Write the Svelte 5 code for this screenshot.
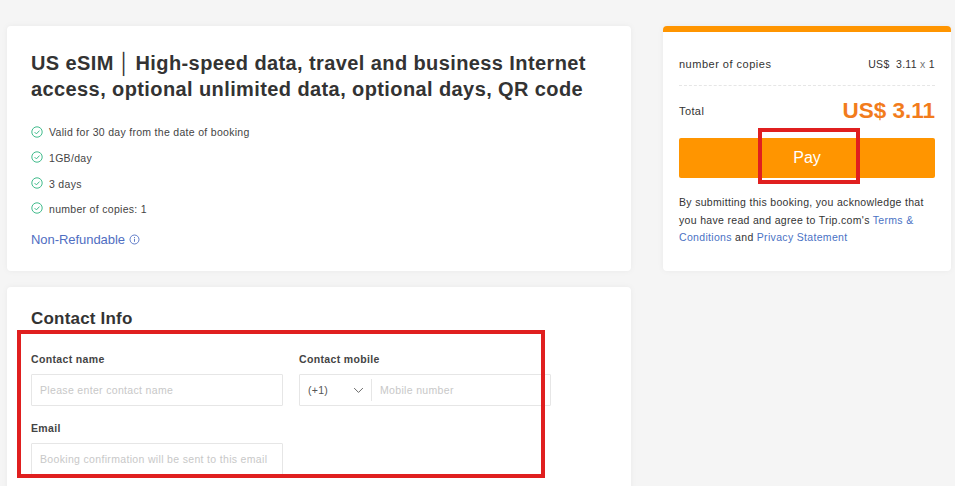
<script lang="ts">
  const perks = [
    { text: 'Valid for 30 day from the date of booking', h: 26 },
    { text: '1GB/day', h: 26 },
    { text: '3 days', h: 25 },
    { text: 'number of copies: 1', h: 26 }
  ];
</script>

<div class="page">
  <div class="left">
    <section class="card product">
      <h1>US eSIM&thinsp;│&thinsp;High-speed data, travel and business Internet access, optional unlimited data, optional days, QR code</h1>
      <ul>
        {#each perks as perk, i}
          <li style="height: {perk.h}px">
            <svg class:lift={i > 0} viewBox="0 0 12 12" width="12" height="12" aria-hidden="true">
              <circle cx="6" cy="6" r="5.2" />
              <path d="M3.6 6.1 5.4 7.9 8.5 4.6" />
            </svg>
            <span>{perk.text}</span>
          </li>
        {/each}
      </ul>
      <div class="refund">
        <span>Non-Refundable</span>
        <svg viewBox="0 0 11 11" width="11" height="11" aria-hidden="true">
          <circle cx="5.5" cy="5.5" r="4.5" />
          <path d="M5.5 4.8v3M5.5 3v1" />
        </svg>
      </div>
    </section>

    <section class="card contact">
      <h2>Contact Info</h2>
      <div class="fields">
        <div class="field">
          <label for="cname">Contact name</label>
          <input id="cname" placeholder="Please enter contact name" />
        </div>
        <div class="field">
          <label for="mobile">Contact mobile</label>
          <div class="phone">
            <div class="code">
              <span>(+1)</span>
              <svg viewBox="0 0 12 8" width="11" height="7" aria-hidden="true"><path d="M1 1.2 6 6.2 11 1.2" /></svg>
            </div>
            <input id="mobile" placeholder="Mobile number" />
          </div>
        </div>
        <div class="field">
          <label for="email">Email</label>
          <input id="email" placeholder="Booking confirmation will be sent to this email" />
        </div>
      </div>
      <div class="mark mark-form"></div>
    </section>
  </div>

  <aside class="card summary">
    <div class="row copies">
      <span class="copies-label">number of copies</span>
      <span class="price">US$&nbsp; 3.11 <em>x</em> 1</span>
    </div>
    <div class="row total">
      <span>Total</span>
      <strong>US$ 3.11</strong>
    </div>
    <button type="button">Pay</button>
    <p>By submitting this booking, you acknowledge that you have read and agree to Trip.com's <a href="#terms">Terms &amp; Conditions</a> and <a href="#privacy">Privacy Statement</a></p>
    <div class="mark mark-pay"></div>
  </aside>
</div>

<style>
  :global(body) {
    margin: 0;
    background: #f5f5f5;
    overflow: hidden;
  }
  .page {
    display: flex;
    align-items: flex-start;
    gap: 32px;
    height: 486px;
    padding: 26px 4px 0 7px;
    box-sizing: border-box;
    overflow: hidden;
    font-family: "Liberation Sans", Arial, sans-serif;
    color: #333;
  }
  .left {
    display: flex;
    flex-direction: column;
    gap: 16px;
    width: 624px;
    flex: none;
  }
  .card {
    position: relative;
    background: #fff;
    border-radius: 4px;
    box-shadow: 0 0 6px rgba(0, 0, 0, 0.05);
  }
  .product {
    height: 245px;
    padding: 24px 24px 0;
    box-sizing: border-box;
  }
  h1 {
    margin: 0;
    font-size: 20px;
    line-height: 26px;
    font-weight: 700;
    letter-spacing: 0.4px;
    color: #333;
  }
  ul {
    list-style: none;
    margin: 17px 0 0;
    padding: 0;
  }
  li {
    display: flex;
    align-items: center;
    gap: 6px;
    font-size: 10.5px;
    letter-spacing: 0.3px;
    color: #444;
  }
  li svg {
    flex: none;
    fill: none;
    stroke: #2db37f;
    stroke-width: 0.9;
  }
  li svg.lift {
    margin-top: -2px;
  }
  .refund {
    display: flex;
    align-items: center;
    gap: 4px;
    margin-top: 10px;
    font-size: 13px;
    letter-spacing: -0.05px;
    color: #4f6ec2;
  }
  .refund svg {
    fill: none;
    stroke: #4f6ec2;
    stroke-width: 0.9;
  }
  .contact {
    height: 260px;
    padding: 22px 24px 0;
    box-sizing: border-box;
  }
  h2 {
    margin: 0;
    font-size: 17px;
    line-height: 20px;
    font-weight: 700;
    letter-spacing: 0.2px;
    color: #333;
  }
  .fields {
    display: grid;
    grid-template-columns: 252px 252px;
    column-gap: 16px;
    row-gap: 16px;
    margin-top: 24px;
  }
  label {
    display: block;
    margin-bottom: 9px;
    font-size: 10.5px;
    line-height: 12px;
    font-weight: 700;
    letter-spacing: 0.35px;
    color: #444;
  }
  input {
    display: block;
    width: 100%;
    height: 32px;
    box-sizing: border-box;
    padding: 0 8px;
    border: 1px solid #e6e6e6;
    border-radius: 1px;
    outline: none;
    background: #fff;
    font: 10.5px "Liberation Sans", Arial, sans-serif;
    letter-spacing: 0.33px;
  }
  input::placeholder {
    color: #c8c8c8;
    opacity: 1;
  }
  .phone {
    display: flex;
    align-items: center;
    height: 32px;
    box-sizing: border-box;
    border: 1px solid #e6e6e6;
    border-radius: 1px;
  }
  .code {
    display: flex;
    align-items: center;
    justify-content: space-between;
    width: 72px;
    height: 22px;
    box-sizing: border-box;
    flex: none;
    padding: 0 7px 0 8px;
    border-right: 1px solid #e6e6e6;
    font-size: 10.5px;
    letter-spacing: 0.3px;
    color: #555;
  }
  .code svg {
    fill: none;
    stroke: #555;
    stroke-width: 1;
  }
  .phone input {
    height: 28px;
    border: 0;
  }
  .summary {
    width: 288px;
    height: 245px;
    flex: none;
    padding: 0 16px;
    box-sizing: border-box;
    border-top: 6px solid #ff9500;
  }
  .row {
    display: flex;
    justify-content: space-between;
  }
  .copies {
    align-items: center;
    height: 54px;
    padding-top: 10px;
    box-sizing: border-box;
    border-bottom: 1px dashed #e6e6e6;
  }
  .copies-label {
    font-size: 11px;
    letter-spacing: 0.5px;
    color: #333;
  }
  .price {
    font-size: 10.5px;
    letter-spacing: 0.3px;
  }
  .price em {
    font-style: normal;
    color: #777;
  }
  .total {
    align-items: center;
    height: 52px;
    padding-bottom: 2px;
    box-sizing: border-box;
    font-size: 11px;
    letter-spacing: 0.4px;
  }
  .total strong {
    font-size: 22.5px;
    font-weight: 700;
    letter-spacing: 0;
    color: #f27c1c;
  }
  button {
    display: block;
    width: 100%;
    height: 40px;
    border: 0;
    border-radius: 2px;
    background: #ff9500;
    color: #fff;
    font: 16px "Liberation Sans", Arial, sans-serif;
    font-weight: 400;
    padding: 0;
  }
  p {
    margin: 16px 0 0;
    font-size: 10.5px;
    line-height: 17.5px;
    letter-spacing: 0.32px;
    color: #333;
  }
  a {
    color: #4a72c4;
    text-decoration: none;
  }
  .mark {
    position: absolute;
    box-sizing: border-box;
    border: 4px solid #e01f1f;
    pointer-events: none;
  }
  .mark-form {
    left: 10px;
    top: 43px;
    width: 528px;
    height: 148px;
  }
  .mark-pay {
    left: 95px;
    top: 96px;
    width: 102px;
    height: 56px;
  }
</style>
